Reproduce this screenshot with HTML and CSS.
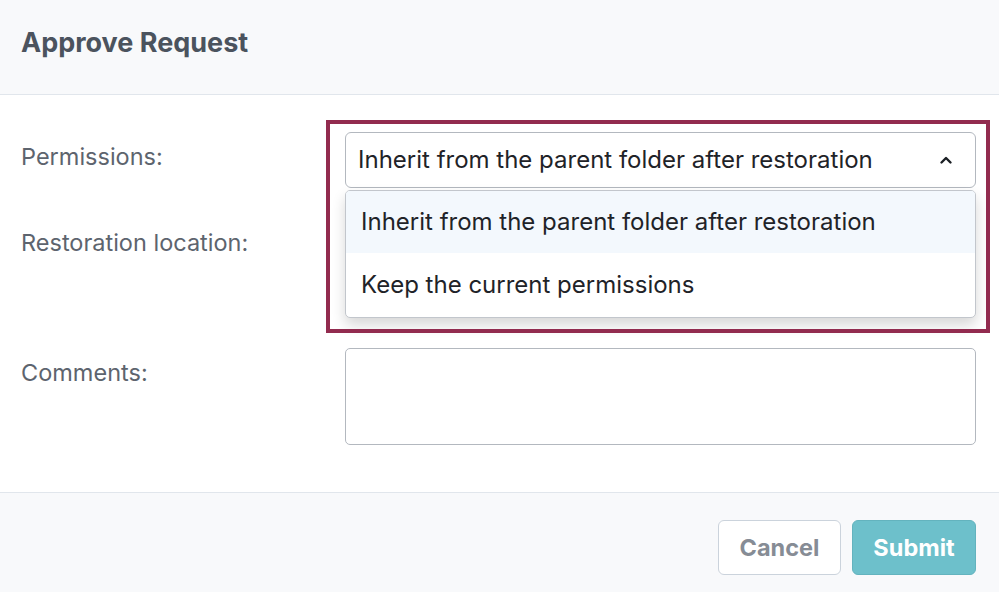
FILE: index.html
```html
<!DOCTYPE html>
<html>
<head>
<meta charset="utf-8">
<link rel="stylesheet" href="styles.css">
</head>
<body>
<div class="modal">
  <header class="modal-header">
    <h1 class="title">Approve Request</h1>
  </header>
  <section class="modal-body">
    <div class="row row-perm">
      <label class="label">Permissions:</label>
      <div class="field">
        <div class="select">
          <span class="select-value">Inherit from the parent folder after restoration</span>
          <svg class="chevron" width="14" height="10" viewBox="0 0 14 10"><path d="M2.5 7.5 L7 3 L11.5 7.5" fill="none" stroke="#1b1f24" stroke-width="2.4" stroke-linecap="round" stroke-linejoin="round"/></svg>
        </div>
        <ul class="menu">
          <li class="option active">Inherit from the parent folder after restoration</li>
          <li class="option">Keep the current permissions</li>
        </ul>
        <div class="highlight"></div>
      </div>
    </div>
    <div class="row row-loc">
      <label class="label">Restoration location:</label>
      <div class="field"></div>
    </div>
    <div class="row row-comments">
      <label class="label">Comments:</label>
      <div class="field">
        <div class="textarea"></div>
      </div>
    </div>
  </section>
  <footer class="modal-footer">
    <button class="btn btn-cancel">Cancel</button>
    <button class="btn btn-submit">Submit</button>
  </footer>
</div>
</body>
</html>
```

FILE: styles.css
```css
* { box-sizing: border-box; }
html, body { margin: 0; padding: 0; }
body {
  font-family: Inter, "Noto Sans", "Liberation Sans", sans-serif;
  background: #ffffff;
  width: 999px;
  height: 592px;
  overflow: hidden;
}
.modal { display: flex; flex-direction: column; height: 592px; }
.modal-header {
  height: 95px;
  background: #f8f9fb;
  border-bottom: 1px solid #e1e6ec;
  padding: 0 21px;
  display: flex;
  align-items: center;
}
.title {
  margin: 0;
  font-size: 27px;
  font-weight: 700;
  color: #4b535e;
  line-height: 32px;
  padding-bottom: 8px;
}
.modal-body {
  flex: 1;
  padding: 37px 23px 0 21px;
  display: flex;
  flex-direction: column;
  gap: 30px;
}
.row { display: flex; }
.label {
  width: 324px;
  flex: none;
  font-size: 23.5px;
  color: #5d646e;
  padding-top: 11px;
  line-height: 28px;
}
.field { flex: 1; position: relative; }
.row-perm { height: 56px; }
.row-loc { height: 100px; }
.row-comments { height: 97px; }
.select {
  height: 56px;
  border: 1px solid #b3b8bf;
  border-radius: 6px;
  background: #fff;
  display: flex;
  align-items: center;
  justify-content: space-between;
  padding: 0 22px 0 12px;
}
.select-value { font-size: 24px; color: #1f2328; line-height: 28px; }
.chevron { display: block; }
.menu {
  position: absolute;
  left: 0; right: 0;
  top: 58px;
  margin: 0; padding: 0;
  list-style: none;
  background: #fff;
  border: 1px solid #c2c6cc;
  border-radius: 5px;
  overflow: hidden;
  box-shadow: 0 7px 14px rgba(0,0,0,0.16);
  z-index: 2;
}
.option {
  height: 62px;
  display: flex;
  align-items: center;
  padding: 0 15px;
  font-size: 24px;
  line-height: 28px;
  color: #1f2328;
}
.option + .option { height: 64px; }
.option.active { background: #f3f8fd; }
.highlight {
  position: absolute;
  left: -19px;
  top: -12px;
  width: 664px;
  height: 213px;
  border: 4px solid #922b4f;
  z-index: 3;
  pointer-events: none;
}
.textarea {
  height: 97px;
  border: 1px solid #b3b8bf;
  border-radius: 5px;
  background: #fff;
}
.modal-footer {
  height: 100px;
  background: #f8f9fb;
  border-top: 1px solid #e1e6ec;
  display: flex;
  justify-content: flex-end;
  align-items: flex-start;
  padding: 27px 23px 0 0;
  gap: 11px;
}
.btn {
  height: 55px;
  border-radius: 6px;
  font-family: inherit;
  font-size: 23.5px;
  font-weight: 700;
  padding: 0;
}
.btn-cancel {
  width: 123px;
  background: #fff;
  border: 1px solid #cbd3dc;
  color: #868c95;
}
.btn-submit {
  width: 124px;
  background: #6dc0cb;
  border: 1px solid #63b3be;
  color: #ffffff;
}
```
